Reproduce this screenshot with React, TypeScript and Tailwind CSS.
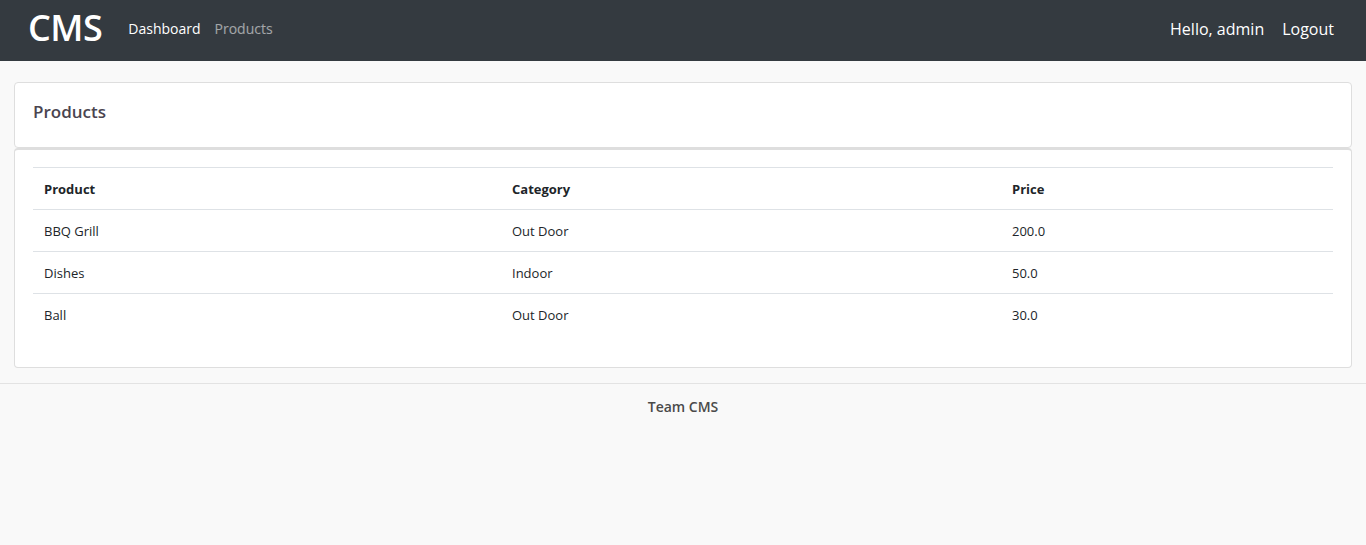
import React from 'react';

interface Product {
    name: string;
    category: string;
    price: string;
}

const products: Product[] = [
    { name: 'BBQ Grill', category: 'Out Door', price: '200.0' },
    { name: 'Dishes', category: 'Indoor', price: '50.0' },
    { name: 'Ball', category: 'Out Door', price: '30.0' },
];

const App: React.FC = () => {
    return (
        <div className="min-h-[545px] bg-[#f9f9f9] font-['Open_Sans',sans-serif] text-[#212529]">
            <nav className="h-[61px] bg-[#343a40] flex items-center pl-[28px] pr-[32px] pb-[4px]">
                <a className="text-[36px] font-semibold text-white leading-none tracking-[-0.5px] mr-[26px] -mt-[2px]">CMS</a>
                <div className="flex items-center gap-[14px] text-[14px]">
                    <a className="text-white">Dashboard</a>
                    <a className="text-white/55">Products</a>
                </div>
                <div className="ml-auto flex items-center gap-[18px] text-[16px] text-white">
                    <span>Hello, admin</span>
                    <a>Logout</a>
                </div>
            </nav>

            <main className="px-[14px] pt-[21px] pb-[15px]">
                <section className="bg-white border border-[#dedede] rounded-[4px] h-[66px] flex items-center px-[18px] pb-[6px]">
                    <h2 className="text-[17px] font-semibold text-[#4a4550]">Products</h2>
                </section>
                <section className="bg-white border border-[#dedede] border-t-2 rounded-[4px] px-[18px] pt-[17px] pb-[31px]">
                    <table className="w-full text-[13px] border-collapse">
                        <thead>
                            <tr className="border-t border-b border-[#dee2e6] h-[42px]">
                                <th className="text-left font-bold px-[11px] pt-[2px] w-[468px]">Product</th>
                                <th className="text-left font-bold px-[11px] pt-[2px] w-[500px]">Category</th>
                                <th className="text-left font-bold px-[11px] pt-[2px]">Price</th>
                            </tr>
                        </thead>
                        <tbody>
                            {products.map((p, i) => (
                                <tr key={p.name} className={`h-[42px] ${i < products.length - 1 ? 'border-b border-[#dee2e6]' : ''}`}>
                                    <td className="px-[11px] pt-[2px]">{p.name}</td>
                                    <td className="px-[11px] pt-[2px]">{p.category}</td>
                                    <td className="px-[11px] pt-[2px]">{p.price}</td>
                                </tr>
                            ))}
                        </tbody>
                    </table>
                </section>
            </main>

            <footer className="border-t border-[#e3e3e3] pt-[12px] text-center text-[14px] font-semibold text-[#4a4a4a]">
                Team CMS
            </footer>
        </div>
    );
};

export default App;
